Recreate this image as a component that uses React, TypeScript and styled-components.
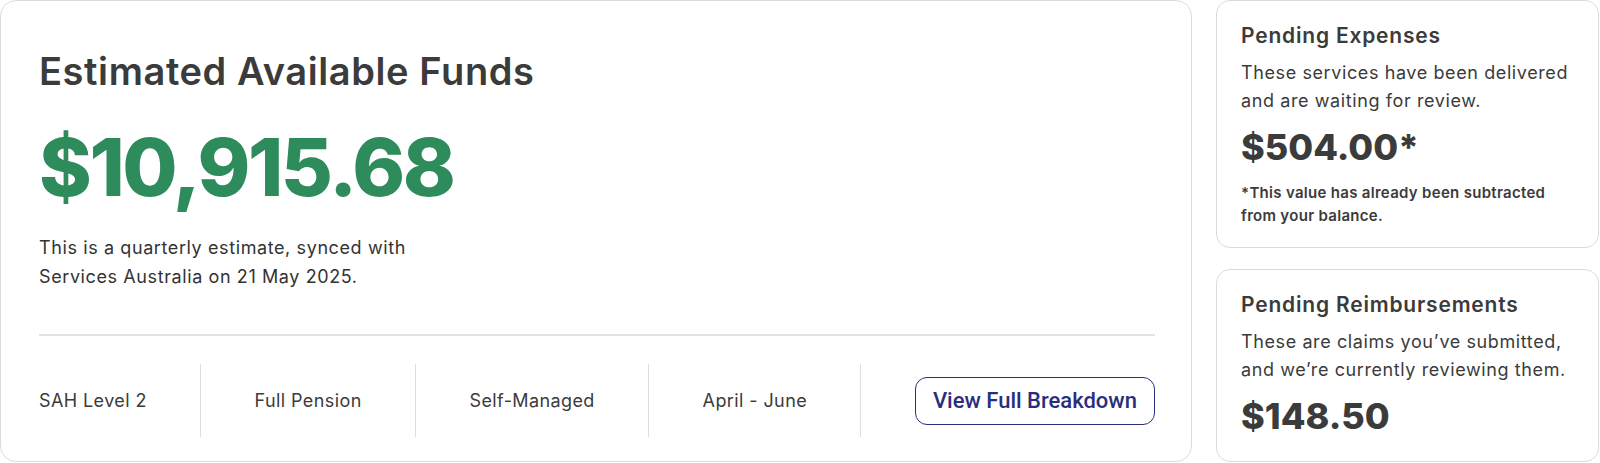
import React from 'react'
import styled, { createGlobalStyle } from 'styled-components'

const GlobalStyle = createGlobalStyle`
  html, body {
    margin: 0;
    padding: 0;
    background: #ffffff;
  }
  body {
    font-family: Inter, "Noto Sans", sans-serif;
    color: #3b3b3b;
  }
`

const Page = styled.div`
  display: flex;
  gap: 24px;
  width: 1600px;
  height: 463px;
  box-sizing: border-box;
  padding: 0 1px 1px 0;
`

const MainCard = styled.section`
  flex: 1;
  display: flex;
  flex-direction: column;
  box-sizing: border-box;
  border: 1px solid #d6dde1;
  border-radius: 16px;
  padding: 46px 36px 24px 38px;
`

const Title = styled.h1`
  margin: 0;
  font-size: 38px;
  line-height: 48px;
  font-weight: 600;
  letter-spacing: 0.6px;
  color: #3b3b3b;
`

const BigAmount = styled.div`
  margin-top: 24px;
  font-size: 80px;
  line-height: 96px;
  font-weight: 800;
  letter-spacing: -2.4px;
  color: #2e8b5c;
`

const Note = styled.p`
  margin: 18px 0 0;
  font-size: 18px;
  line-height: 29px;
  letter-spacing: 0.6px;
  color: #333333;
`

const Rule = styled.hr`
  margin: 43px 0 0;
  border: none;
  border-top: 2px solid #dde3e6;
`

const InfoRow = styled.div`
  margin-top: 28px;
  height: 74px;
  display: flex;
  align-items: center;
  justify-content: space-between;
`

const InfoItem = styled.span`
  font-size: 18px;
  letter-spacing: 0.4px;
  color: #3b3b3b;
`

const VDivider = styled.span`
  align-self: stretch;
  width: 1px;
  background: #dadfe2;
`

const BreakdownButton = styled.button`
  height: 48px;
  padding: 0 17px;
  border: 1.5px solid #2a2e7c;
  border-radius: 12px;
  background: #ffffff;
  color: #2a2e7c;
  font-family: Roboto, "Liberation Sans", sans-serif;
  font-size: 22px;
  font-weight: 500;
  cursor: pointer;
`

const SideColumn = styled.div`
  width: 383px;
  display: flex;
  flex-direction: column;
  gap: 21px;
`

const SideCard = styled.section<{ grow?: boolean }>`
  box-sizing: border-box;
  border: 1px solid #d6dde1;
  border-radius: 14px;
  padding: 20px 12px 20px 24px;
  ${({ grow }) => (grow ? 'flex: 1;' : '')}
`

const SideTitle = styled.h2`
  margin: 0;
  font-size: 21px;
  line-height: 30px;
  font-weight: 600;
  letter-spacing: 0.8px;
  color: #3b3b3b;
`

const SideText = styled.p`
  margin: 8px 0 0;
  font-size: 18px;
  line-height: 28px;
  letter-spacing: 0.6px;
  color: #3b3b3b;
`

const SideAmount = styled.div`
  margin-top: 8px;
  font-size: 36px;
  line-height: 48px;
  font-weight: 800;
  color: #3b3b3b;
`

const Footnote = styled.p`
  margin: 10px 0 0;
  font-size: 15px;
  line-height: 23px;
  font-weight: 600;
  letter-spacing: 0.3px;
  color: #3b3b3b;
`

const info = ['SAH Level 2', 'Full Pension', 'Self-Managed', 'April - June']

export default function App() {
  return (
    <>
      <GlobalStyle />
      <Page>
        <MainCard>
          <Title>Estimated Available Funds</Title>
          <BigAmount>$10,915.68</BigAmount>
          <Note>
            This is a quarterly estimate, synced with
            <br />
            Services Australia on 21 May 2025.
          </Note>
          <Rule />
          <InfoRow>
            {info.map((label) => (
              <React.Fragment key={label}>
                <InfoItem>{label}</InfoItem>
                <VDivider />
              </React.Fragment>
            ))}
            <BreakdownButton>View Full Breakdown</BreakdownButton>
          </InfoRow>
        </MainCard>
        <SideColumn>
          <SideCard>
            <SideTitle>Pending Expenses</SideTitle>
            <SideText>
              These services have been delivered
              <br />
              and are waiting for review.
            </SideText>
            <SideAmount>$504.00*</SideAmount>
            <Footnote>
              *This value has already been subtracted
              <br />
              from your balance.
            </Footnote>
          </SideCard>
          <SideCard grow>
            <SideTitle>Pending Reimbursements</SideTitle>
            <SideText>
              These are claims you’ve submitted,
              <br />
              and we’re currently reviewing them.
            </SideText>
            <SideAmount>$148.50</SideAmount>
          </SideCard>
        </SideColumn>
      </Page>
    </>
  )
}
